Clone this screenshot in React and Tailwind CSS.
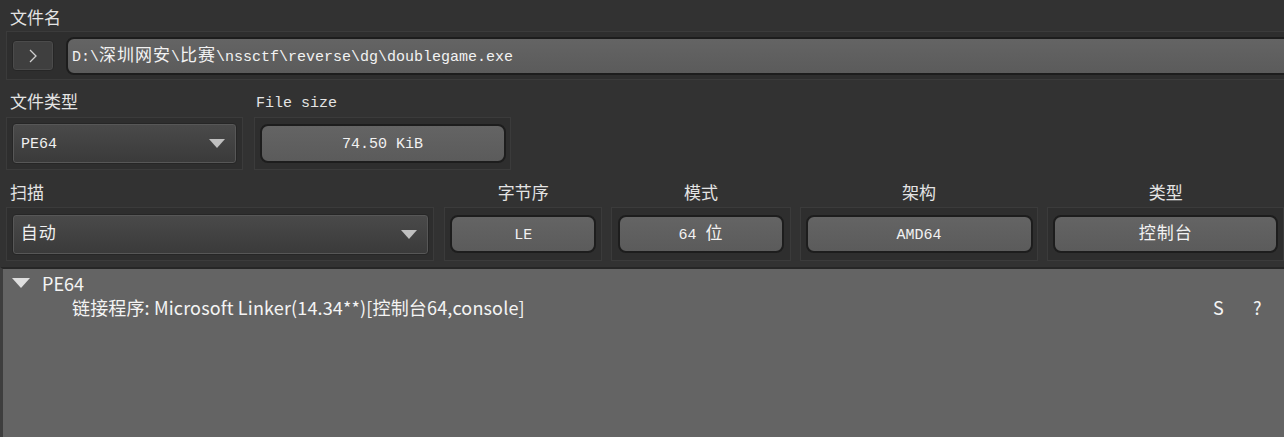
import React from 'react';

const mono = { fontFamily: '"Liberation Mono", "Noto Sans CJK SC", monospace' };
const sans = { fontFamily: '"Noto Sans CJK SC", "Noto Sans", sans-serif' };

// CJK glyphs in the mono fields are double width
const W = ({ children }) => <span className="text-[17px] tracking-[1px]">{children}</span>;

// Group frame drawn around each control
const Frame = ({ className = '', children }) => (
	<div
		className={`border border-[#3b3b3b] bg-[#2e2e2e] flex items-center ${className}`}
	>
		{children}
	</div>
);

// Read-only value field (rounded grey pill)
const Field = ({ className = '', children }) => (
	<div
		className={`rounded-[8px] border-2 border-[#1d1d1d] bg-gradient-to-b from-[#646464] to-[#5b5b5b] flex items-center justify-center pt-[3px] text-[15px] leading-[20px] text-[#f2f2f2] ${className}`}
		style={mono}
	>
		<span className="whitespace-pre">{children}</span>
	</div>
);

const Caret = () => (
	<svg width="16" height="9" viewBox="0 0 16 9" className="shrink-0">
		<polygon points="0,0 16,0 8,9" fill="#bfbfbf" />
	</svg>
);

const Combo = ({ className = '', children }) => (
	<div
		className={`rounded-[4px] border border-[#262626] bg-gradient-to-b from-[#4a4a4a] to-[#3a3a3a] shadow-[inset_0_0_0_1px_#575757] flex items-center justify-between pl-[8px] pr-[11px] text-[15px] leading-[20px] text-[#f0f0f0] ${className}`}
		style={mono}
	>
		<span className="pt-[3px]">{children}</span>
		<Caret />
	</div>
);

export default function App() {
	return (
		<div className="w-[1284px] h-[437px] bg-[#323232] overflow-hidden flex flex-col text-[#e4e4e4]">
			{/* 文件名 */}
			<div className="h-[31px] pl-[10px] pt-[5px] text-[17px] leading-[24px]" style={sans}>
				文件名
			</div>
			<Frame className="ml-[6px] w-[1300px] h-[49px] pl-[5px] gap-[12px] shrink-0">
				<div className="w-[42px] h-[31px] rounded-[4px] border border-[#262626] bg-[#3f3f3f] shadow-[inset_0_0_0_1px_#4b4b4b] flex items-center justify-center">
					<svg width="8" height="14" viewBox="0 0 8 14">
						<polyline points="1,1 7,7 1,13" fill="none" stroke="#cfcfcf" strokeWidth="1.3" />
					</svg>
				</div>
				<Field className="flex-1 h-[38px] !justify-start px-[4px]">
					D:\<W>深圳网安</W>\<W>比赛</W>\nssctf\reverse\dg\doublegame.exe
				</Field>
			</Frame>

			{/* 文件类型 / File size */}
			<div className="h-[37px] pl-[10px] pt-[9px] flex leading-[24px] shrink-0">
				<div className="w-[246px] text-[17px]" style={sans}>
					文件类型
				</div>
				<div className="text-[15px] pt-[3px]" style={mono}>
					File size
				</div>
			</div>
			<div className="h-[53px] pl-[6px] flex gap-[11px] shrink-0">
				<Frame className="w-[237px] justify-center">
					<Combo className="w-[225px] h-[41px]">PE64</Combo>
				</Frame>
				<Frame className="w-[257px] justify-center">
					<Field className="w-[246px] h-[39px]">74.50 KiB</Field>
				</Frame>
			</div>

			{/* 扫描 row */}
			<div className="pl-[6px] flex shrink-0" style={sans}>
				<div className="w-[429px] flex flex-col">
					<div className="h-[37px] pl-[4px] pt-[10px] text-[17px] leading-[24px]">扫描</div>
					<Frame className="h-[54px] justify-center">
						<Combo className="w-[417px] h-[41px]">
							<W>自动</W>
						</Combo>
					</Frame>
				</div>
				<div className="w-[158px] ml-[10px] flex flex-col">
					<div className="h-[37px] pt-[10px] text-[17px] leading-[24px] text-center">字节序</div>
					<Frame className="h-[54px] justify-center">
						<Field className="w-[146px] h-[38px]">LE</Field>
					</Frame>
				</div>
				<div className="w-[180px] ml-[9px] flex flex-col">
					<div className="h-[37px] pt-[10px] text-[17px] leading-[24px] text-center">模式</div>
					<Frame className="h-[54px] justify-center">
						<Field className="w-[166px] h-[38px]">
							{'64 '}
							<W>位</W>
						</Field>
					</Frame>
				</div>
				<div className="w-[239px] ml-[9px] flex flex-col">
					<div className="h-[37px] pt-[10px] text-[17px] leading-[24px] text-center">架构</div>
					<Frame className="h-[54px] justify-center">
						<Field className="w-[227px] h-[38px]">AMD64</Field>
					</Frame>
				</div>
				<div className="w-[237px] ml-[9px] flex flex-col">
					<div className="h-[37px] pt-[10px] text-[17px] leading-[24px] text-center">类型</div>
					<Frame className="h-[54px] justify-center">
						<Field className="w-[225px] h-[38px]">
							<W>控制台</W>
						</Field>
					</Frame>
				</div>
			</div>

			{/* Result tree */}
			<div
				className="mt-[6px] flex-1 bg-[#646464] border-t-2 border-l-[3px] border-t-[#262626] border-l-[#3e3e3e] pt-[2px] text-[18px] leading-[24px] text-[#f4f4f4]"
				style={sans}
			>
				<div className="flex items-center h-[24px]">
					<svg width="18" height="10" viewBox="0 0 18 10" className="ml-[9px] mr-[12px]">
						<polygon points="0,0 18,0 9,10" fill="#dedede" />
					</svg>
					<span>PE64</span>
				</div>
				<div className="flex items-center h-[24px] pl-[69px] pr-[3px]">
					<span className="flex-1 tracking-[0.15px]">链接程序: Microsoft Linker(14.34**)[控制台64,console]</span>
					<span className="w-[40px]">S</span>
					<span className="w-[28px]">?</span>
				</div>
			</div>
		</div>
	);
}
